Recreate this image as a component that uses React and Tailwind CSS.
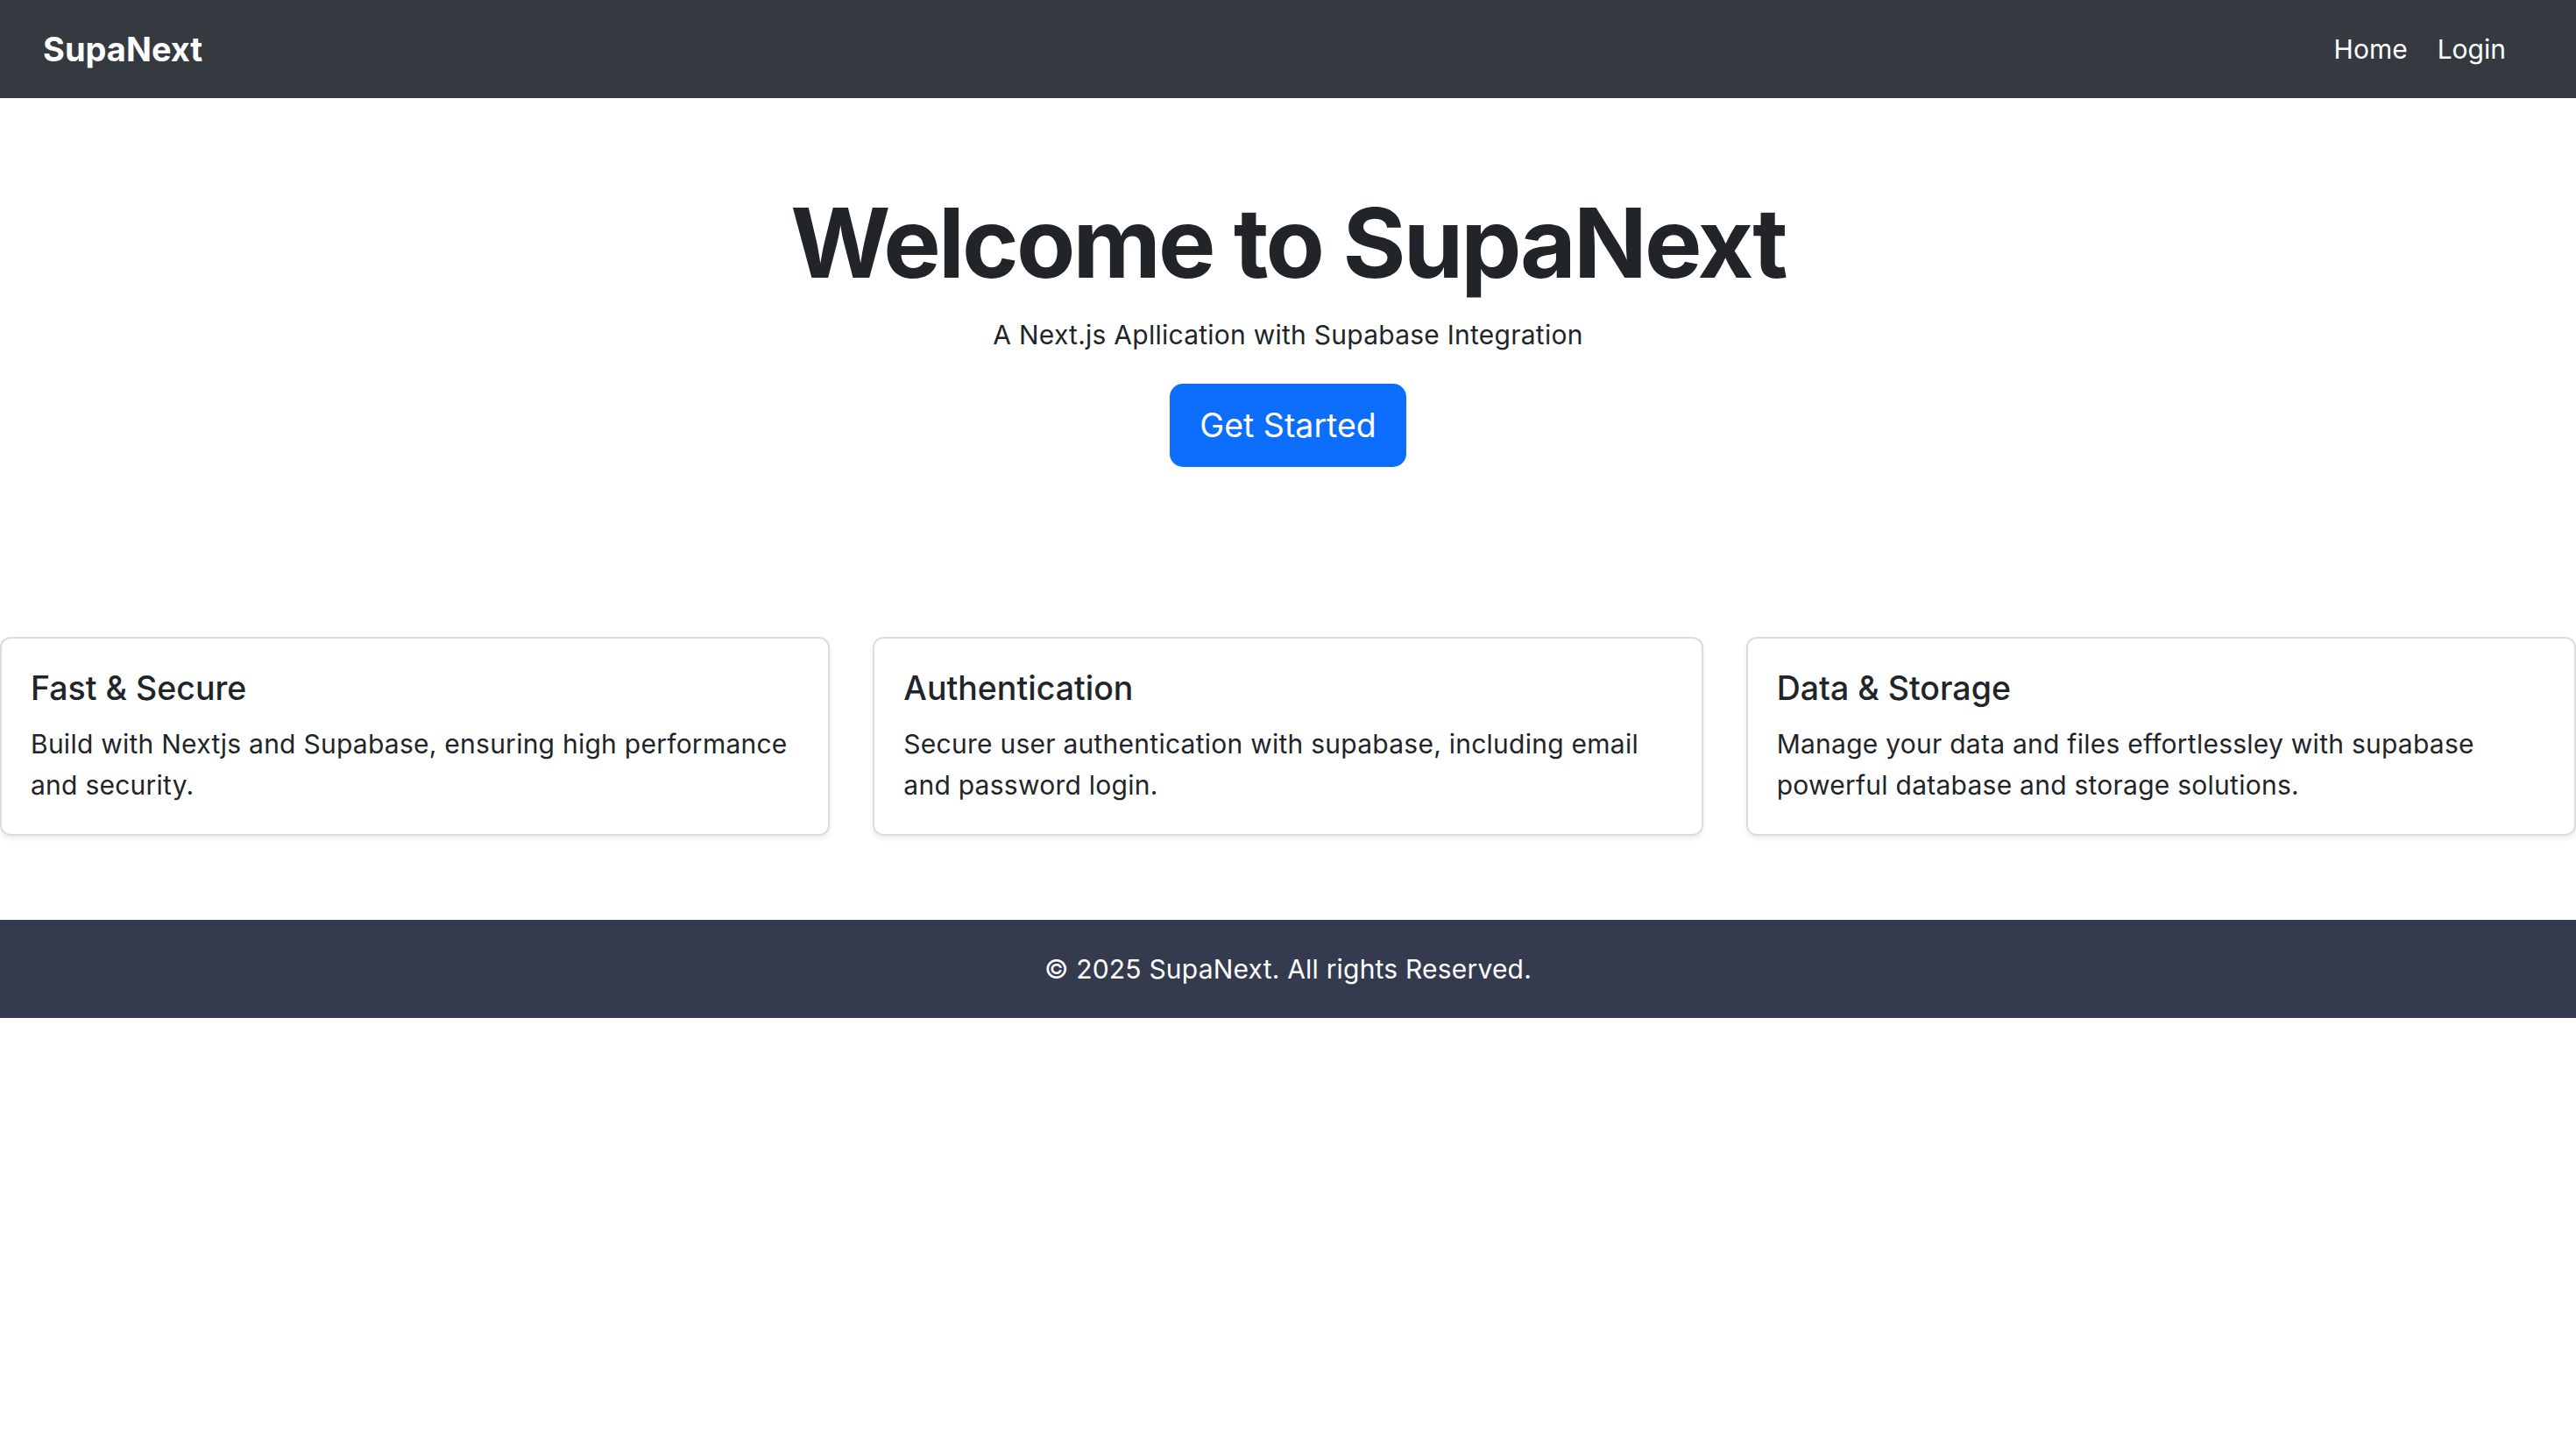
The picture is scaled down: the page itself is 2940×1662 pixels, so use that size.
const features = [
  {
    title: "Fast & Secure",
    text: "Build with Nextjs and Supabase, ensuring high performance and security.",
  },
  {
    title: "Authentication",
    text: "Secure user authentication with supabase, including email and password login.",
  },
  {
    title: "Data & Storage",
    text: "Manage your data and files effortlessley with supabase powerful database and storage solutions.",
  },
];

export default function App() {
  return (
    <div className="min-h-screen bg-white text-[#212529] font-['Inter',sans-serif]">
      {/* Navbar */}
      <nav className="h-[112px] bg-[#343a40] flex items-center justify-between pl-[49px] pr-[80px]">
        <a href="#" className="text-white font-bold text-[38px] tracking-[0px]">
          SupaNext
        </a>
        <div className="flex items-center gap-[34px] text-white text-[30px]">
          <a href="#">Home</a>
          <a href="#">Login</a>
        </div>
      </nav>

      {/* Hero */}
      <section className="flex flex-col items-center pt-[99px]">
        <h1 className="text-[110px] leading-[132px] font-bold tracking-[-2.8px]">
          Welcome to SupaNext
        </h1>
        <p className="mt-[17px] text-[30px] leading-[45px] tracking-[0.25px]">
          A Next.js Apllication with Supabase Integration
        </p>
        <button className="mt-[33px] h-[95px] px-[34px] rounded-[15px] bg-[#0d6efd] text-white text-[37.5px] leading-none hover:bg-[#0b5ed7]">
          Get Started
        </button>
      </section>

      {/* Features */}
      <section className="mt-[194px] grid grid-cols-3 gap-[49px]">
        {features.map((f) => (
          <div
            key={f.title}
            className="border-2 border-[#dadcdf] rounded-[12px] shadow-[0_3px_6px_rgba(0,0,0,0.08)] px-[33px] pt-[34px] pb-[32px]"
          >
            <h5 className="text-[37.5px] leading-[45px] font-medium">{f.title}</h5>
            <p className="mt-[18px] text-[30px] leading-[47px] tracking-[0.25px]">{f.text}</p>
          </div>
        ))}
      </section>

      {/* Footer */}
      <footer className="mt-[96px] h-[112px] bg-[#343b4f] flex items-center justify-center text-white text-[30px] tracking-[0.2px]">
        © 2025 SupaNext. All rights Reserved.
      </footer>
    </div>
  );
}
